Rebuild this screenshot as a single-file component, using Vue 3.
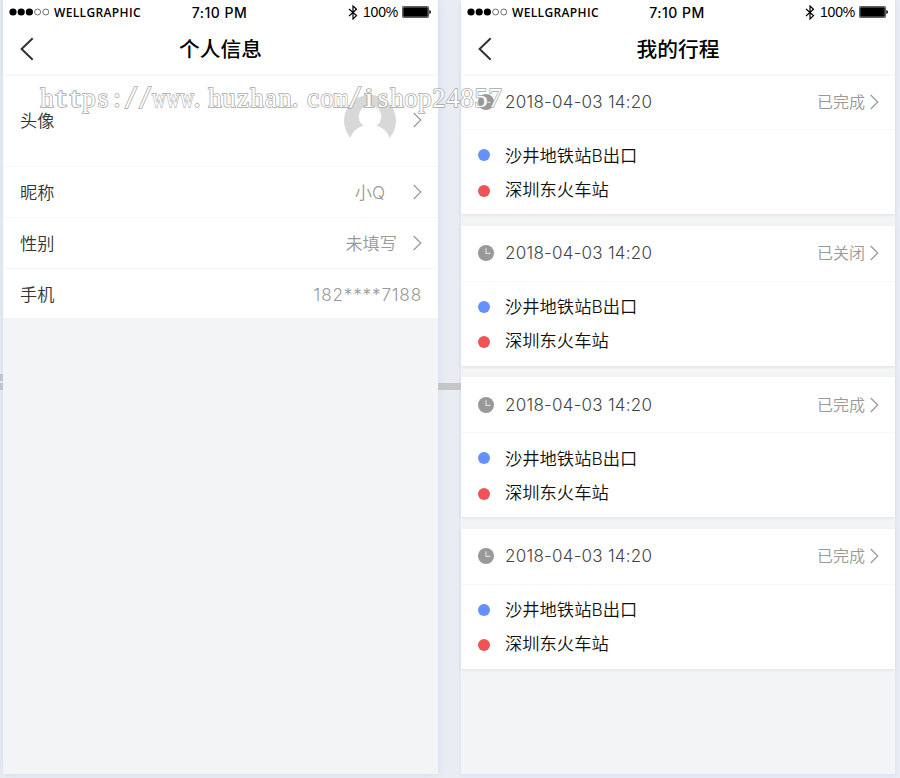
<template>
    <div class="canvas">
        <section v-for="screen in screens" :key="screen.id" class="phone" :class="screen.id">
            <header class="top">
                <div class="status">
                    <div class="carrier">
                        <svg width="40" height="10" viewBox="0 0 40 10">
                            <circle v-for="n in 3" :key="n" :cx="n * 8.2 - 4.2" cy="5" r="3.6" fill="#000" />
                            <circle v-for="n in 2" :key="'o' + n" :cx="n * 8.2 + 20.4" cy="5" r="3" fill="none" stroke="#333" stroke-width="0.7" />
                        </svg>
                        <span class="name">WELLGRAPHIC</span>
                    </div>
                    <span class="time">7:10 PM</span>
                    <div class="power">
                        <svg class="bluetooth" width="10" height="15" viewBox="0 0 10 15">
                            <path d="M1 4 L8.5 10.6 L5 14 V1 L8.5 4.2 L1 11" fill="none" stroke="#000" stroke-width="1.2" />
                        </svg>
                        <span class="percent">100%</span>
                        <svg class="battery" width="29" height="12" viewBox="0 0 29 12">
                            <rect x="0.4" y="0.4" width="26.2" height="11.2" rx="1.2" fill="#fff" stroke="#000" stroke-width="0.7" />
                            <rect x="1.2" y="1.2" width="24.6" height="9.6" rx="0.5" />
                            <path d="M27.4 4 Q29 4.5 29 6 Q29 7.5 27.4 8 Z" />
                        </svg>
                    </div>
                </div>
                <div class="bar">
                    <svg class="back" width="14" height="24" viewBox="0 0 14 24">
                        <path d="M12.7 1.3 L1.6 12 L12.7 22.7" fill="none" stroke="#333" stroke-width="2" />
                    </svg>
                    <h1>{{ screen.title }}</h1>
                </div>
            </header>

            <ul v-if="screen.id === 'profile'" class="fields">
                <li v-for="field in fields" :key="field.label" :class="{ tall: field.avatar }">
                    <span class="label">{{ field.label }}</span>
                    <svg v-if="field.avatar" class="avatar" width="52" height="52" viewBox="0 0 52 52">
                        <path d="M6.5 44 A26 26 0 1 1 45.5 44 C43.5 37.5 39 33.5 32.5 31.8 A11.3 11.3 0 1 0 19.5 31.8 C13 33.5 8.5 37.5 6.5 44 Z" fill="#d8d8d8" />
                    </svg>
                    <span v-else class="value" :class="field.kind">{{ field.value }}</span>
                    <svg v-if="field.link" class="arrow" width="9" height="16" viewBox="0 0 9 16">
                        <path d="M0.7 1 L7.8 8 L0.7 15" fill="none" stroke="#999" stroke-width="1.2" />
                    </svg>
                </li>
            </ul>

            <div v-else class="trips">
                <article v-for="(trip, i) in trips" :key="i" class="trip">
                    <div class="summary">
                        <svg class="clock" width="16" height="16" viewBox="0 0 16 16">
                            <circle cx="8" cy="8" r="8" fill="#999" />
                            <path d="M8 3.2 V8.3 H12.4" fill="none" stroke="#ddd" stroke-width="1.2" />
                        </svg>
                        <span class="date">{{ trip.date }}</span>
                        <span class="state">{{ trip.state }}</span>
                        <svg class="arrow" width="9" height="16" viewBox="0 0 9 16">
                            <path d="M0.7 1 L7.8 8 L0.7 15" fill="none" stroke="#999" stroke-width="1.2" />
                        </svg>
                    </div>
                    <div class="route">
                        <p class="from">{{ trip.from }}</p>
                        <p class="to">{{ trip.to }}</p>
                    </div>
                </article>
            </div>
        </section>

        <i class="tick upper"></i>
        <i class="tick lower"></i>
        <i class="tick middle"></i>
        <div class="watermark">
            <span v-for="(char, i) in watermark" :key="i" :class="glyphClass(char)">{{ char }}</span>
        </div>
    </div>
</template>

<script setup>
const screens = [
    { id: 'profile', title: '个人信息' },
    { id: 'journeys', title: '我的行程' }
];

const fields = [
    { label: '头像', avatar: true, link: true },
    { label: '昵称', value: '小Q', kind: 'nick', link: true },
    { label: '性别', value: '未填写', link: true },
    { label: '手机', value: '182****7188', kind: 'phone-number' }
];

const trips = ['已完成', '已关闭', '已完成', '已完成'].map((state) => ({
    state,
    date: '2018-04-03 14:20',
    from: '沙井地铁站B出口',
    to: '深圳东火车站'
}));

const watermark = [...'https://www.huzhan.com/ishop24857'];

// Every glyph sits in an equal cell, so wide ones are squeezed and thin ones stretched
const glyphClass = (char) => ({
    wide: char === 'w' || char === 'm',
    thin: char === 't' || char === 'i',
    slash: char === '/',
    dot: char === '.'
});
</script>

<style>
body {
    background: #e9edf3;
    overflow: hidden;
}
</style>

<style scoped>
.canvas {
    position: relative;
    display: flex;
    gap: 23px;
    box-sizing: border-box;
    width: 900px;
    height: 778px;
    padding-left: 3px;
    overflow: hidden;
    background: #e9edf3;
    font-family: Inter, "Noto Sans CJK SC", sans-serif;
}

.phone {
    width: 435px;
    height: 774px;
    flex: none;
    background: #f2f4f6;
    box-shadow: 0 0 10px #cfdcf0;
}

.journeys {
    width: 434px;
    box-shadow: 0 2px 5px #d8e2f5;
}

.top {
    position: relative;
    height: 74px;
    background: #fff;
    box-shadow: 0 1px 3px rgba(0, 0, 0, 0.06);
}

.status {
    display: grid;
    grid-template-columns: 1fr auto 1fr;
    align-items: center;
    height: 24px;
    padding: 0 7px 0 6px;
    color: #000;
}

.carrier,
.power {
    display: flex;
    align-items: center;
}

.name {
    margin-left: 5px;
    font: 600 12px "Open Sans", sans-serif;
    letter-spacing: 0.35px;
}

.time {
    margin-right: 1px;
    font: 500 14px Inter, sans-serif;
    letter-spacing: 0.5px;
}

.power {
    justify-content: flex-end;
}

.percent {
    margin: 0 4px 0 5px;
    font: 14px "Liberation Sans", sans-serif;
    letter-spacing: -0.2px;
}

.bar {
    display: flex;
    align-items: center;
    height: 50px;
    padding: 0 17px;
}

.back {
    flex: none;
}

h1 {
    flex: 1;
    margin: 0 14px 2px 0;
    text-align: center;
    font-size: 20.7px;
    font-weight: 500;
    color: #000;
}

.fields {
    margin: 0;
    padding: 0;
    list-style: none;
    background: #fff;
}

.fields li {
    display: flex;
    align-items: center;
    box-sizing: border-box;
    height: 51px;
    padding: 0 16px 0 17px;
    border-bottom: 1px solid #f7f7f7;
}

.fields li.tall {
    height: 93px;
}

.fields li:last-child {
    height: 49px;
    padding-top: 1px;
    border-bottom: 0;
}

.label {
    flex: 1;
    padding-bottom: 2px;
    font-size: 17.2px;
    font-weight: 350;
    color: #333;
}

.value {
    padding-bottom: 2px;
    font-size: 17.2px;
    font-weight: 350;
    color: #999;
}

.avatar {
    margin-right: 1px;
}

.nick {
    margin-right: 12px;
}

.phone-number {
    padding-bottom: 0;
    letter-spacing: 0.8px;
}

.fields .arrow {
    margin-left: 16px;
}

.summary {
    display: flex;
    align-items: center;
    box-sizing: border-box;
    height: 56px;
    padding: 0 16px 0 17px;
    border-bottom: 1px solid #f7f7f7;
}

.trip {
    height: 140px;
    margin-bottom: 11.5px;
    background: #fff;
    box-shadow: 0 1px 3px rgba(0, 0, 0, 0.08);
}

.date {
    flex: 1;
    margin-left: 11px;
    font-size: 17px;
    font-weight: 350;
    letter-spacing: 0.25px;
    color: #444;
}

.state {
    margin-right: 5px;
    padding-bottom: 2px;
    font-size: 16px;
    font-weight: 350;
    color: #999;
}

.route {
    padding: 7px 17px;
}

.route p {
    display: flex;
    align-items: center;
    height: 34px;
    margin: 0;
    font-size: 17.3px;
    font-weight: 350;
    color: #111;
}

.route p::before {
    content: "";
    width: 12px;
    height: 12px;
    margin-top: 2px;
    margin-right: 15px;
    border-radius: 50%;
    background: #6491fb;
}

.route .to::before {
    margin-top: 5px;
    background: #ef5355;
}

.tick {
    position: absolute;
    left: 0;
    width: 3px;
    height: 7px;
    background: #bfc3ca;
}

.upper {
    top: 374px;
}

.lower {
    top: 383px;
}

.middle {
    top: 383px;
    left: 438px;
    width: 23px;
    background: #c5c6ca;
}

.watermark {
    position: absolute;
    top: 83px;
    left: 40px;
    display: flex;
    font: 26px/30px "Liberation Serif", serif;
    color: #fff;
    -webkit-text-stroke: 1.4px #a6a6a6;
    paint-order: stroke fill;
}

.watermark span {
    display: flex;
    justify-content: center;
    width: 14px;
    transform: scale(1.04, 1.08);
}

.watermark .wide {
    transform: scale(0.74, 1.08);
}

.watermark .thin {
    transform: scale(1.45, 1.08);
}

.watermark .slash {
    transform: scale(1.6, 1.25);
    -webkit-text-stroke-width: 1px;
}

.watermark .dot {
    justify-content: flex-start;
}
</style>
